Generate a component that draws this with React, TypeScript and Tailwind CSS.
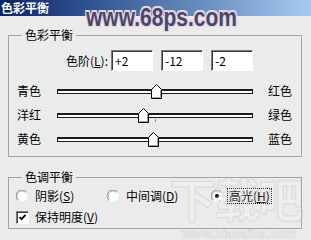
import React from 'react';

const sliders = [
  { left: '青色', right: '红色', value: 2 },
  { left: '洋红', right: '绿色', value: -12 },
  { left: '黄色', right: '蓝色', value: -2 },
];

const Thumb: React.FC<{ value: number }> = ({ value }) => {
  const center = 98 + value * 0.98;
  return (
    <svg
      className="absolute top-[-5px]"
      style={{ left: Math.round(center - 5.5) }}
      width="11"
      height="15"
      viewBox="0 0 11 15"
    >
      <polygon points="5.5,0.5 10.5,5.5 10.5,14.5 0.5,14.5 0.5,5.5" fill="#fff" stroke="#000" />
      <polyline points="9.5,6 9.5,13.5 1.5,13.5" fill="none" stroke="#9c9c9c" />
    </svg>
  );
};

const Radio: React.FC<{ checked?: boolean }> = ({ checked }) => (
  <svg width="12" height="12" viewBox="0 0 12 12" className="shrink-0">
    <circle cx="6" cy="6" r="5.5" fill="#fff" />
    <path d="M1.8 10.2 A5.5 5.5 0 0 1 10.2 1.8" fill="none" stroke="#8a8a8a" />
    <path d="M2.6 9.4 A4.5 4.5 0 0 1 9.4 2.6" fill="none" stroke="#c4c4c4" />
    {checked && <circle cx="6" cy="6" r="2" fill="#000" />}
  </svg>
);

const Check: React.FC = () => (
  <div className="w-[13px] h-[13px] shrink-0 bg-white border border-t-[#7c7c7c] border-l-[#7c7c7c] border-b-white border-r-white shadow-[inset_1px_1px_0_#3a3a3a] flex items-center justify-center">
    <svg width="9" height="9" viewBox="0 0 9 9">
      <polyline points="1.5,4 3.5,6.2 7.5,1.8" fill="none" stroke="#000" strokeWidth="1.8" />
    </svg>
  </div>
);

const Field: React.FC<{ value: string }> = ({ value }) => (
  <div className="w-[42px] h-[21px] bg-white border border-t-[#7c7c7c] border-l-[#7c7c7c] border-b-white border-r-white shadow-[inset_1px_1px_0_#3a3a3a] pl-[3px] flex items-center text-[12px] leading-none">
    {value}
  </div>
);

export default function App() {
  return (
    <div className="relative w-[311px] h-[240px] overflow-hidden bg-[#ebebeb] text-black font-['Noto_Sans_CJK_SC',sans-serif] text-[12px]">
      {/* title bar */}
      <div className="h-[16px] flex items-center pl-[1px] bg-gradient-to-r from-[#0a246a] to-[#a6caf0]">
        <span className="text-white font-bold text-[12px] leading-none">色彩平衡</span>
      </div>

      {/* color balance group */}
      <fieldset className="mt-[12px] ml-[8px] w-[294px] border border-[#a3a3a3] pb-[5px]">
        <legend className="ml-[13px] px-[3px] text-[12px] leading-[14px]">色彩平衡</legend>
        <div className="mt-[8px] flex items-center">
          <div className="w-[102px] pr-[3px] text-right leading-none">
            色阶(<u>L</u>):
          </div>
          <div className="flex gap-[8px]">
            <Field value="+2" />
            <Field value="-12" />
            <Field value="-2" />
          </div>
        </div>
        <div className="mt-[8px] flex flex-col">
          {sliders.map((s) => (
            <div key={s.left} className="h-[24px] flex items-center pl-[8px]">
              <span className="w-[40px] leading-none">{s.left}</span>
              <div className="relative w-[196px] h-[5px]">
                <div className="h-full bg-white border border-[#1a1a1a] border-t-2" />
                <div className="absolute left-[98px] top-[6px] w-px h-[3px] bg-[#8a8a8a]" />
                <Thumb value={s.value} />
              </div>
              <span className="ml-[15px] leading-none">{s.right}</span>
            </div>
          ))}
        </div>
      </fieldset>

      {/* tone balance group */}
      <fieldset className="mt-[13px] ml-[8px] w-[294px] border border-[#a3a3a3] pb-[3px]">
        <legend className="ml-[13px] px-[3px] text-[12px] leading-[14px]">色调平衡</legend>
        <div className="mt-[4px] h-[16px] flex items-center pl-[7px]">
          <div className="w-[91px] flex items-center">
            <Radio />
            <span className="ml-[7px] leading-none">
              阴影(<u>S</u>)
            </span>
          </div>
          <div className="w-[104px] flex items-center">
            <Radio />
            <span className="ml-[7px] leading-none">
              中间调(<u>D</u>)
            </span>
          </div>
          <div className="flex items-center">
            <Radio checked />
            <span className="ml-[4px] px-[1px] py-[1px] border border-dotted border-black leading-none">
              高光(<u>H</u>)
            </span>
          </div>
        </div>
        <div className="mt-[5px] h-[16px] flex items-center pl-[7px]">
          <Check />
          <span className="ml-[6px] leading-none">
            保持明度(<u>V</u>)
          </span>
        </div>
      </fieldset>

      {/* watermarks */}
      <div className="absolute left-[86px] top-[4px] text-[21px] font-bold font-['Liberation_Sans',Arial,sans-serif] text-[#4f4466] leading-none scale-y-[1.2] origin-top [text-shadow:0_0_2px_#e6e0ee,1px_1px_0_#ddd6e6,-1px_-1px_0_#ddd6e6,1px_-1px_0_#ddd6e6,-1px_1px_0_#ddd6e6]">
        www.68ps.com
      </div>
      <div className="absolute left-[170px] top-[174px] text-[46px] font-bold leading-none tracking-[-2px] text-[rgba(255,255,255,0.2)] [-webkit-text-stroke:1px_rgba(170,170,170,0.3)]">
        下载吧
      </div>
      <div className="absolute left-[182px] top-[227px] text-[13px] font-bold leading-none font-['Liberation_Sans',Arial,sans-serif] text-[rgba(255,255,255,0.25)] [-webkit-text-stroke:0.6px_rgba(160,160,160,0.35)]">
        www.xiazaiba.com
      </div>
    </div>
  );
}
